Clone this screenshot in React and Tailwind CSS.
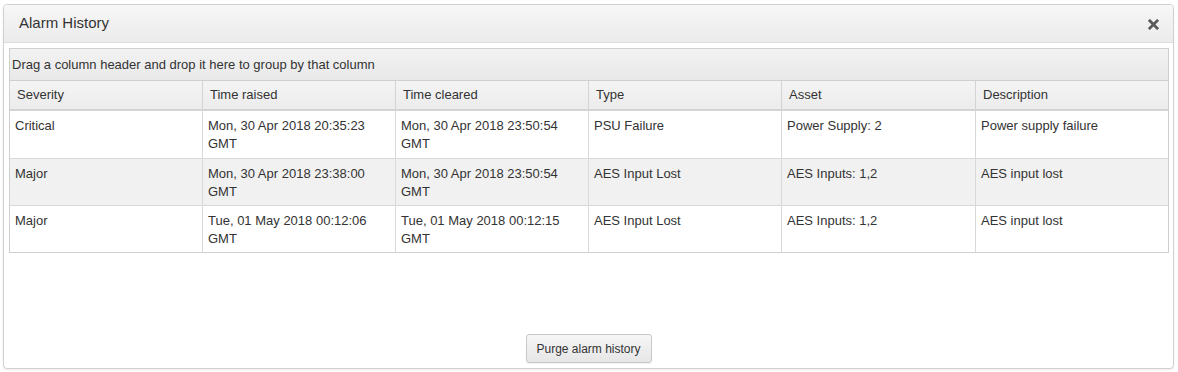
import React from "react";

const cols = ["Severity", "Time raised", "Time cleared", "Type", "Asset", "Description"];
const rows = [
  ["Critical", "Mon, 30 Apr 2018 20:35:23 GMT", "Mon, 30 Apr 2018 23:50:54 GMT", "PSU Failure", "Power Supply: 2", "Power supply failure"],
  ["Major", "Mon, 30 Apr 2018 23:38:00 GMT", "Mon, 30 Apr 2018 23:50:54 GMT", "AES Input Lost", "AES Inputs: 1,2", "AES input lost"],
  ["Major", "Tue, 01 May 2018 00:12:06 GMT", "Tue, 01 May 2018 00:12:15 GMT", "AES Input Lost", "AES Inputs: 1,2", "AES input lost"],
];

export default function App() {
  return (
    <div className="w-[1178px] h-[372px] bg-white pt-[4px] pl-[3px]" style={{ fontFamily: '"Liberation Sans", Arial, sans-serif' }}>
      <div className="w-[1171px] h-[365px] flex flex-col border border-[#d0d0d0] rounded-[4px] shadow-[0_1px_2px_rgba(0,0,0,0.08)] bg-white overflow-hidden text-[#333]">
        <div className="h-[38px] shrink-0 flex items-center justify-between pl-[15px] pr-[14px] bg-gradient-to-b from-[#f7f7f7] to-[#ebebeb] border-b border-[#dcdcdc]">
          <span className="text-[15px] text-[#333]">Alarm History</span>
          <svg width="11" height="11" viewBox="0 0 12 12" className="mt-[1px]">
            <path d="M2 2 L10 10 M10 2 L2 10" stroke="#5a5a5a" strokeWidth="3" strokeLinecap="square" />
          </svg>
        </div>
        <div className="flex-1 flex flex-col px-[5px] pt-[5px] pb-[4px]">
          <div className="w-[1160px] border border-[#cfcfcf] text-[13px]">
            <div className="h-[32px] flex items-center pl-[2px] bg-gradient-to-b from-[#f2f2f2] to-[#e9e9e9] border-b border-[#cfcfcf]">
              Drag a column header and drop it here to group by that column
            </div>
            <div className="grid grid-cols-[192px_193px_193px_193px_194px_1fr] h-[30px] bg-gradient-to-b from-[#f4f4f4] to-[#ececec] border-b-2 border-[#d4d4d4]">
              {cols.map((c, i) => (
                <div key={c} className={`flex items-center pl-[7px] ${i > 0 ? "border-l border-[#d4d4d4]" : ""}`}>{c}</div>
              ))}
            </div>
            {rows.map((r, ri) => (
              <div key={ri} className={`grid grid-cols-[192px_193px_193px_193px_194px_1fr] h-[47px] ${ri % 2 === 1 ? "bg-[#f1f1f1]" : "bg-white"} ${ri > 0 ? "border-t border-[#d9d9d9]" : ""}`}>
                {r.map((c, i) => (
                  <div key={i} className={`pl-[5px] pr-[10px] pt-[6px] leading-[18px] ${i > 0 ? "border-l border-[#d9d9d9]" : ""}`}>{c}</div>
                ))}
              </div>
            ))}
          </div>
          <div className="flex-1" />
          <div className="flex justify-center">
            <button className="w-[126px] h-[29px] -mt-[1px] mb-[1px] border border-[#c8c8c8] rounded-[3px] bg-gradient-to-b from-[#f6f6f6] to-[#e6e6e6] text-[12px] text-[#333] shadow-[0_1px_1px_rgba(0,0,0,0.06)]">
              Purge alarm history
            </button>
          </div>
        </div>
      </div>
    </div>
  );
}
